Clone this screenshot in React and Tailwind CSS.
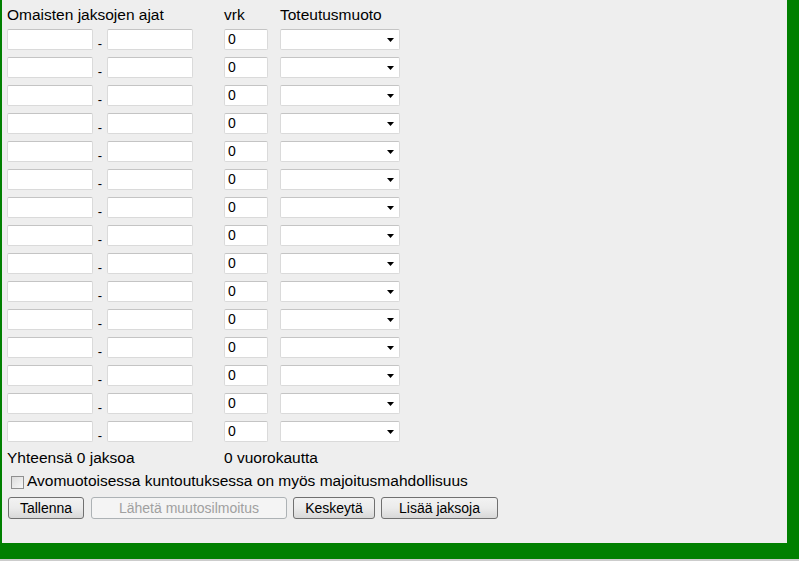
import React from 'react';

const ROWS = Array.from({ length: 15 }, (_, i) => i);

const inputCls =
  'h-[21px] bg-white border border-[#dadada] border-t-[#c4c4c4] rounded-[2px] outline-none px-1 text-[13px] text-black';

const btnCls =
  'h-[22px] rounded-[3px] border border-[#707070] bg-gradient-to-b from-[#f2f2f2] via-[#ebebeb] to-[#d8d8d8] text-[14px] text-black flex items-center justify-center';

const Row = () => (
  <div className="flex items-center h-[21px]">
    <input className={`${inputCls} w-[86px]`} readOnly />
    <span className="w-[14px] text-center text-[13px] pt-[8px] leading-none">-</span>
    <input className={`${inputCls} w-[86px]`} readOnly />
    <div className="w-[31px]" />
    <input className={`${inputCls} w-[44px] px-[3px] text-[14px]`} value="0" readOnly />
    <div className="w-[12px]" />
    <div className={`${inputCls} w-[120px] flex items-center justify-end pr-[5px]`}>
      <svg width="7" height="4" viewBox="0 0 7 4">
        <path d="M0 0 H7 L3.5 4 Z" fill="#000" />
      </svg>
    </div>
  </div>
);

export default function App() {
  return (
    <div
      className="w-[799px] h-[561px] bg-[#cccccc] overflow-hidden"
      style={{ fontFamily: '"Liberation Sans", Arial, sans-serif' }}
    >
      <div className="h-[559px] bg-[#008000] pl-[2px] pr-[12px] pb-[16px]">
        <div className="h-full bg-[#eeeeee] pl-[5px] pt-[5px] text-black">
          {/* Header */}
          <div className="flex h-[20px] items-center text-[15.5px]">
            <span className="w-[217px]">Omaisten jaksojen ajat</span>
            <span className="w-[56px]">vrk</span>
            <span>Toteutusmuoto</span>
          </div>

          {/* Rows */}
          <div className="flex flex-col gap-[7px] mt-[4px]">
            {ROWS.map((i) => (
              <Row key={i} />
            ))}
          </div>

          {/* Totals */}
          <div className="flex h-[20px] items-center text-[15.5px] mt-[6px]">
            <span className="w-[217px]">Yhteensä 0 jaksoa</span>
            <span>0 vuorokautta</span>
          </div>

          {/* Checkbox */}
          <label className="flex items-center h-[20px] mt-[3px] pl-[4px] text-[15.5px]">
            <span className="w-[13px] h-[13px] border border-[#8f8f8f] bg-gradient-to-br from-[#dcdcdc] to-[#f8f8f8] mr-[3px] mt-[2px]" />
            Avomuotoisessa kuntoutuksessa on myös majoitusmahdollisuus
          </label>

          {/* Buttons */}
          <div className="flex items-center mt-[6px] pl-[1px]">
            <button className={`${btnCls} w-[76px]`}>Tallenna</button>
            <button
              className="h-[22px] w-[196px] ml-[7px] rounded-[3px] border border-[#adb2b5] bg-[#f4f4f4] text-[14px] text-[#a0a0a0] flex items-center justify-center"
              disabled
            >
              Lähetä muutosilmoitus
            </button>
            <button className={`${btnCls} w-[82px] ml-[6px]`}>Keskeytä</button>
            <button className={`${btnCls} w-[117px] ml-[6px]`}>Lisää jaksoja</button>
          </div>
        </div>
      </div>
    </div>
  );
}
